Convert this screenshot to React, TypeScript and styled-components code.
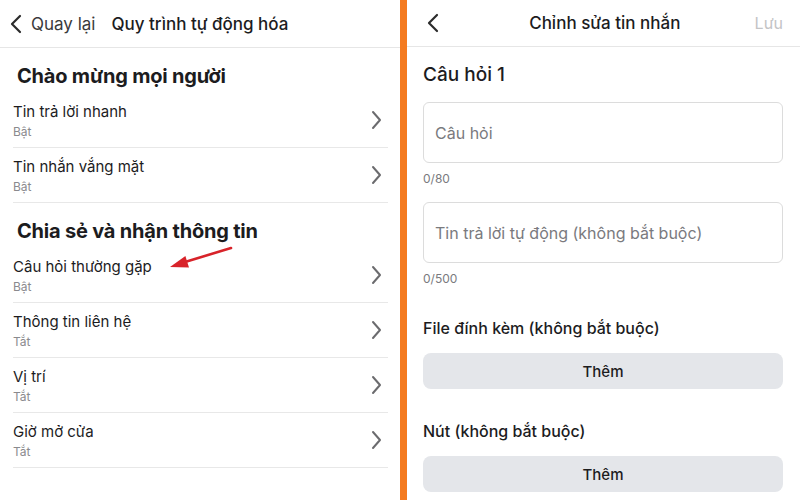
import styled, { createGlobalStyle } from "styled-components";

const GlobalStyle = createGlobalStyle`
    html, body {
        margin: 0;
        padding: 0;
        background: #ffffff;
    }
    body {
        font-family: Inter, "Noto Sans", "Liberation Sans", sans-serif;
        color: #1c1c1e;
    }
`;

const Screen = styled.div`
    width: 800px;
    height: 500px;
    display: flex;
    overflow: hidden;
    background: #fff;
`;

const Panel = styled.div<{ width?: number }>`
    ${props => props.width ? `width: ${props.width}px;` : 'flex: 1;'}
    display: flex;
    flex-direction: column;
    min-width: 0;
    overflow: hidden;
`;

const Divider = styled.div`
    width: 7px;
    background: #f47b20;
`;

const Header = styled.div<{ centered?: boolean }>`
    flex-shrink: 0;
    height: 48px;
    box-sizing: border-box;
    border-bottom: 1px solid #e6e6e6;
    display: flex;
    align-items: center;
    padding: 0 17px 0 10px;
    ${props => props.centered && 'justify-content: space-between; padding-left: 20px; height: 47px;'}
`;

const BackLabel = styled.span`
    font-size: 17px;
    color: #3a3a3c;
    margin-left: 9px;
`;

const HeaderTitle = styled.span`
    font-size: 17px;
    font-weight: 500;
    color: #1c1c1e;
    margin-left: 16px;
`;

const CenterTitle = styled.span`
    font-size: 17px;
    font-weight: 500;
    color: #1c1c1e;
    margin-left: 16px;
`;

const SaveLabel = styled.span`
    font-size: 16px;
    color: #c4c4c6;
`;

const SectionTitle = styled.h2`
    margin: 0;
    padding: 16px 0 5px 17px;
    font-size: 20px;
    line-height: 24px;
    font-weight: 700;
    letter-spacing: -0.2px;
`;

const Row = styled.div`
    position: relative;
    height: 55px;
    box-sizing: border-box;
    margin: 0 12px 0 13px;
    padding-right: 6px;
    border-bottom: 1px solid #e8e8e8;
    display: flex;
    align-items: center;
`;

const RowText = styled.div`
    flex: 1;
    display: flex;
    flex-direction: column;
    align-self: flex-start;
    padding-top: 9px;
`;

const RowTitle = styled.span`
    font-size: 15px;
    line-height: 19px;
    color: #1c1c1e;
`;

const RowSub = styled.span`
    font-size: 12px;
    line-height: 18px;
    margin-top: 2px;
    color: #8a8a8e;
`;

const Pointer = styled.svg`
    position: absolute;
    left: 152px;
    top: -8px;
`;

const Form = styled.div`
    flex-shrink: 0;
    padding: 16px 17px 0 16px;
    display: flex;
    flex-direction: column;
`;

const FormTitle = styled.h3`
    margin: 0 0 15px;
    font-size: 19px;
    line-height: 24px;
    font-weight: 500;
`;

const Field = styled.div`
    height: 61px;
    box-sizing: border-box;
    border: 1px solid #dcdcdc;
    border-radius: 6px;
    display: flex;
    align-items: center;
    padding: 0 11px;
    font-size: 16px;
    color: #7a7a7e;
`;

const Counter = styled.span`
    font-size: 12px;
    line-height: 16px;
    color: #7a7a7e;
    margin: 8px 0 15px;
`;

const Label = styled.span`
    font-size: 16px;
    line-height: 20px;
    font-weight: 500;
    margin: 16px 0 15px;
`;

const AddButton = styled.div`
    flex-shrink: 0;
    height: 36px;
    margin-bottom: 16px;
    border-radius: 8px;
    background: #e4e6ea;
    display: flex;
    align-items: center;
    justify-content: center;
    font-size: 15px;
    font-weight: 500;
    color: #1c1c1e;
`;

function BackIcon({ color = "#2b2b2b" }) {
    return (
        <svg width="12" height="20" viewBox="0 0 12 20">
            <path d="M10 2 L2 10 L10 18" fill="none" stroke={color} strokeWidth="2.2" strokeLinecap="round" strokeLinejoin="round" />
        </svg>
    );
}

function Chevron() {
    return (
        <svg width="11" height="20" viewBox="0 0 11 20">
            <path d="M2 2 L9 10 L2 18" fill="none" stroke="#6b6b6e" strokeWidth="2" strokeLinecap="round" strokeLinejoin="round" />
        </svg>
    );
}

const sections = [
    {
        title: "Chào mừng mọi người",
        rows: [
            { name: "Tin trả lời nhanh", state: "Bật" },
            { name: "Tin nhắn vắng mặt", state: "Bật" },
        ],
    },
    {
        title: "Chia sẻ và nhận thông tin",
        rows: [
            { name: "Câu hỏi thường gặp", state: "Bật", marked: true },
            { name: "Thông tin liên hệ", state: "Tắt" },
            { name: "Vị trí", state: "Tắt" },
            { name: "Giờ mở cửa", state: "Tắt" },
        ],
    },
];

export default function App() {
    return (
        <Screen>
            <GlobalStyle />
            <Panel width={400}>
                <Header>
                    <BackIcon />
                    <BackLabel>Quay lại</BackLabel>
                    <HeaderTitle>Quy trình tự động hóa</HeaderTitle>
                </Header>
                {sections.map(section => (
                    <div key={section.title}>
                        <SectionTitle>{section.title}</SectionTitle>
                        {section.rows.map(row => (
                            <Row key={row.name}>
                                <RowText>
                                    <RowTitle>{row.name}</RowTitle>
                                    <RowSub>{row.state}</RowSub>
                                </RowText>
                                <Chevron />
                                {row.marked && (
                                    <Pointer width="75" height="35" viewBox="0 0 75 35">
                                        <line x1="66" y1="8" x2="20" y2="22" stroke="#d8232a" strokeWidth="2.6" strokeLinecap="round" />
                                        <polygon points="5,27 20.4,15.9 24,27.4" fill="#d8232a" />
                                    </Pointer>
                                )}
                            </Row>
                        ))}
                    </div>
                ))}
            </Panel>
            <Divider />
            <Panel>
                <Header centered>
                    <BackIcon />
                    <CenterTitle>Chỉnh sửa tin nhắn</CenterTitle>
                    <SaveLabel>Lưu</SaveLabel>
                </Header>
                <Form>
                    <FormTitle>Câu hỏi 1</FormTitle>
                    <Field>Câu hỏi</Field>
                    <Counter>0/80</Counter>
                    <Field>Tin trả lời tự động (không bắt buộc)</Field>
                    <Counter>0/500</Counter>
                    <Label>File đính kèm (không bắt buộc)</Label>
                    <AddButton>Thêm</AddButton>
                    <Label>Nút (không bắt buộc)</Label>
                    <AddButton>Thêm</AddButton>
                </Form>
            </Panel>
        </Screen>
    );
}
